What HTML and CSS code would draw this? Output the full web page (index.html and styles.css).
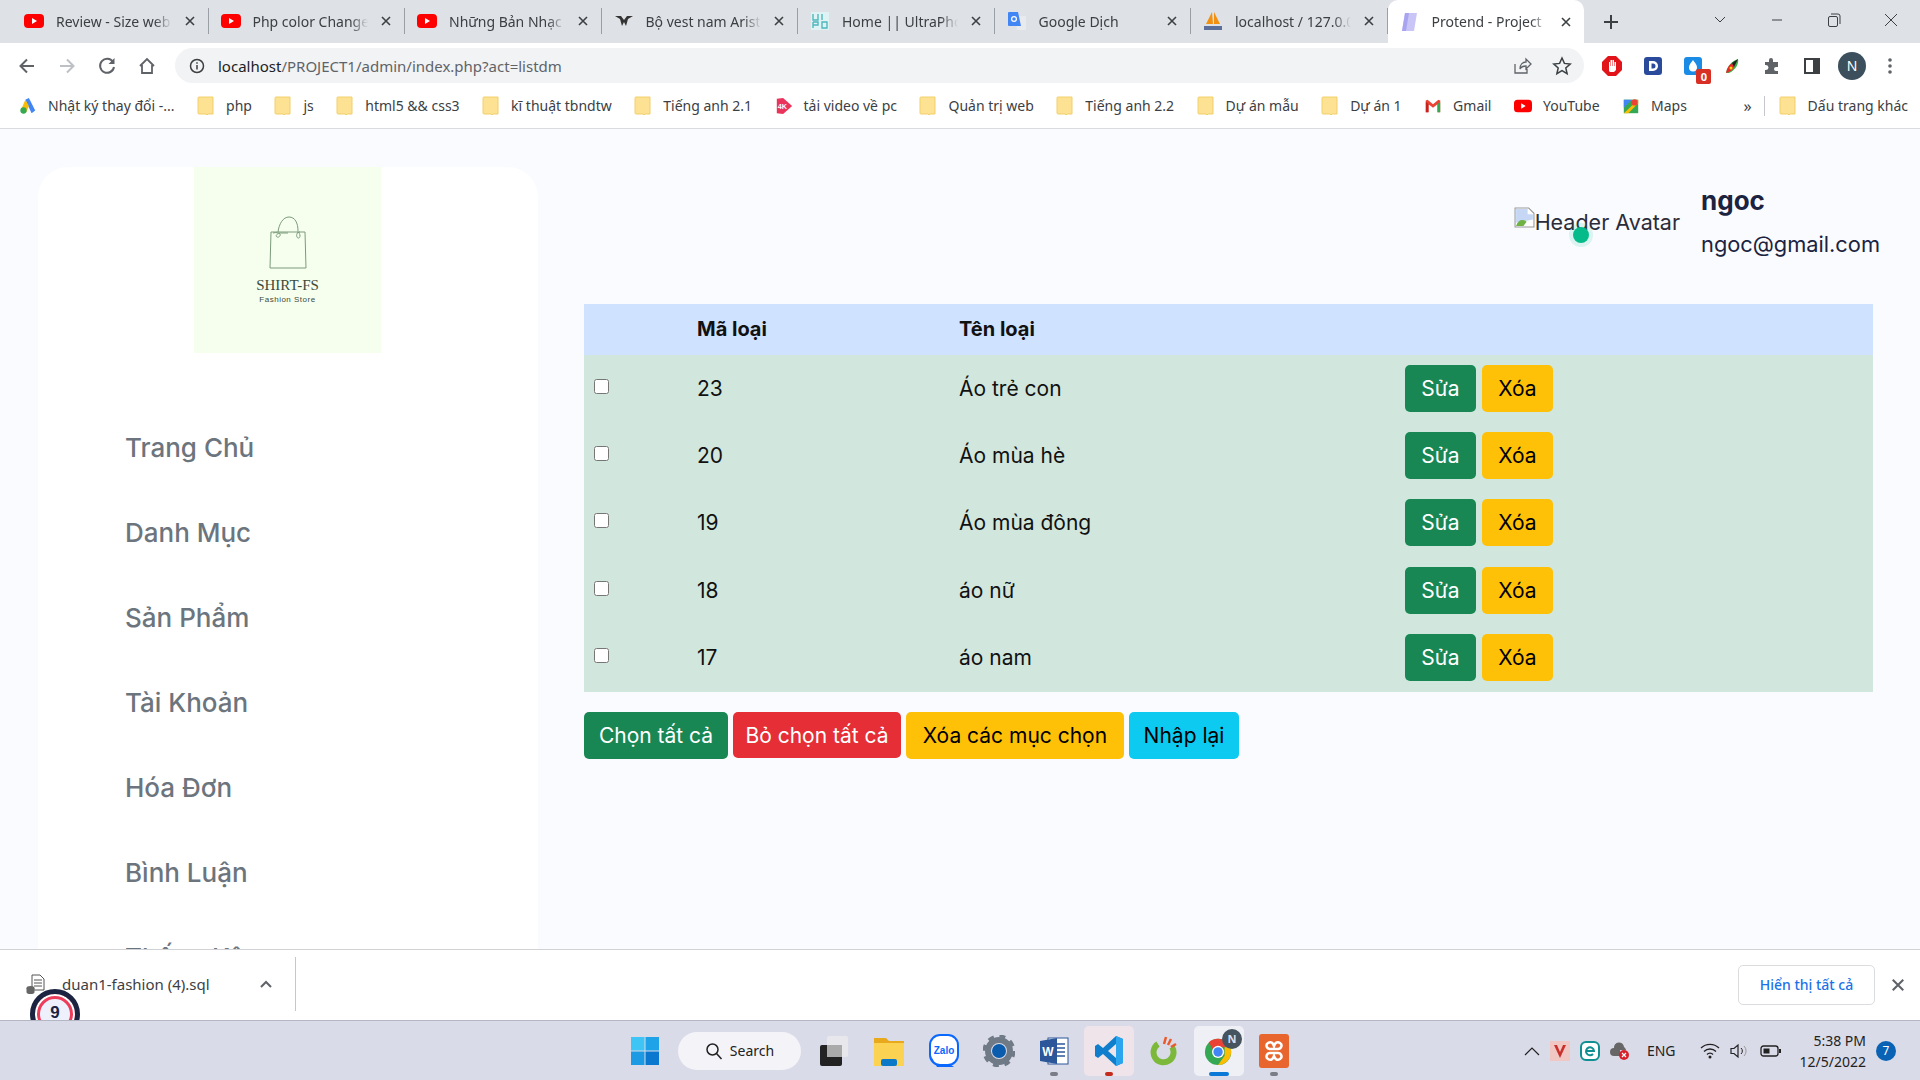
FILE: index.html
```html
<!DOCTYPE html>
<html lang="vi">
<head>
    <meta charset="UTF-8">
    <title>Protend - Project</title>
    <link rel="stylesheet" href="styles.css">
</head>
<body>
    <svg class="defs" width="0" height="0">
        <symbol id="yt" viewBox="0 0 20 20"><rect y="3" width="20" height="14" rx="4" fill="#f00"/><path d="M8 7l5 3-5 3z" fill="#fff"/></symbol>
        <symbol id="folder" viewBox="0 0 18 20"><path d="M2 1h9l5 0v17h-5l-1 1-1-1H2a1 1 0 0 1-1-1V2a1 1 0 0 1 1-1z" fill="#fde293" stroke="#f2cf6b"/></symbol>
        <symbol id="close" viewBox="0 0 12 12"><path d="M2 2l8 8M10 2l-8 8" stroke="#3c4043" stroke-width="1.6" fill="none"/></symbol>
    </svg>

    <div class="tabs">
        <div class="tab"><svg class="fav"><use href="#yt"/></svg><span class="tab-title">Review - Size web</span><svg class="tab-x"><use href="#close"/></svg></div>
        <div class="tab"><svg class="fav"><use href="#yt"/></svg><span class="tab-title">Php color Change</span><svg class="tab-x"><use href="#close"/></svg></div>
        <div class="tab"><svg class="fav"><use href="#yt"/></svg><span class="tab-title">Những Bản Nhạc</span><svg class="tab-x"><use href="#close"/></svg></div>
        <div class="tab"><svg class="fav" viewBox="0 0 20 20"><path d="M1 5h6l3 4 3-4h6l-5 3-2 7-2-4-2 4-2-7z" fill="#333"/></svg><span class="tab-title">Bộ vest nam Arist</span><svg class="tab-x"><use href="#close"/></svg></div>
        <div class="tab"><svg class="fav" viewBox="0 0 20 20"><rect x="1" y="1" width="18" height="18" fill="#dff3f4"/><path d="M3 3v6h5V3M3 11v6M12 3v6M3 11h5v3H3M12 11h5v6h-5z" stroke="#4fb7bd" stroke-width="1.4" fill="none"/></svg><span class="tab-title">Home || UltraPhone</span><svg class="tab-x"><use href="#close"/></svg></div>
        <div class="tab"><svg class="fav" viewBox="0 0 20 20"><path d="M8 5h10a1 1 0 0 1 1 1v12a1 1 0 0 1-1 1h-8z" fill="#e8eaed"/><path d="M2 1h9l3 14H2a1 1 0 0 1-1-1V2a1 1 0 0 1 1-1z" fill="#4285f4"/><circle cx="7" cy="8" r="2.4" fill="none" stroke="#fff" stroke-width="1.2"/></svg><span class="tab-title">Google Dịch</span><svg class="tab-x"><use href="#close"/></svg></div>
        <div class="tab"><svg class="fav" viewBox="0 0 20 20"><path d="M3 13L9 1l1 12zM11 13l0-12 6 12z" fill="#f29111"/><path d="M1 15h18v4H1z" fill="#5a6f99"/></svg><span class="tab-title">localhost / 127.0.0</span><svg class="tab-x"><use href="#close"/></svg></div>
        <div class="tab active"><svg class="fav" viewBox="0 0 20 20"><path d="M5 1h12l-3 18H2z" fill="#c9c6f7"/><path d="M5 1h4L6 19H2z" fill="#a9a4f0"/></svg><span class="tab-title">Protend - Project</span><svg class="tab-x"><use href="#close"/></svg></div>
        <svg class="new-tab" viewBox="0 0 16 16"><path d="M8 1v14M1 8h14" stroke="#3c4043" stroke-width="2"/></svg>
        <div class="win-ctrl">
            <svg width="14" height="14" viewBox="0 0 14 14"><path d="M2 4l5 5 5-5" stroke="#3c4043" fill="none"/></svg>
            <svg width="14" height="14" viewBox="0 0 14 14"><path d="M2 7h10" stroke="#3c4043"/></svg>
            <svg width="14" height="14" viewBox="0 0 14 14"><rect x="1.5" y="3.5" width="9" height="10" rx="1.5" stroke="#3c4043" fill="none"/><path d="M4 1h7a2 2 0 0 1 2 2v8" stroke="#3c4043" fill="none"/></svg>
            <svg width="14" height="14" viewBox="0 0 14 14"><path d="M1 1l12 12M13 1L1 13" stroke="#3c4043" fill="none"/></svg>
        </div>
    </div>

    <div class="toolbar">
        <svg class="tool" viewBox="0 0 20 20"><path d="M17 10H4M10 3.5L3.5 10l6.500 6.500" stroke="#5f6368" stroke-width="2" fill="none"/></svg>
        <svg class="tool" viewBox="0 0 20 20"><path d="M3 10h13M10 3.5l6.500 6.500-6.500 6.500" stroke="#bdc1c6" stroke-width="2" fill="none"/></svg>
        <svg class="tool" viewBox="0 0 20 20"><path d="M16 6a7 7 0 1 0 1 5" stroke="#5f6368" stroke-width="2" fill="none"/><path d="M17.5 2v6h-6z" fill="#5f6368"/></svg>
        <svg class="tool" viewBox="0 0 20 20"><path d="M3 10l7-7 7 7M5 9v8h10V9" stroke="#5f6368" stroke-width="1.8" fill="none"/></svg>
        <div class="omnibox">
            <svg width="16" height="16" viewBox="0 0 16 16"><circle cx="8" cy="8" r="6.5" fill="none" stroke="#3c4043" stroke-width="1.5"/><path d="M8 7v4.500M8 4.200v1.600" stroke="#3c4043" stroke-width="1.5"/></svg>
            <span class="url"><b>localhost</b>/PROJECT1/admin/index.php?act=listdm</span>
            <svg class="omni-end" width="20" height="20" viewBox="0 0 20 20"><path d="M3 8v9h12v-4M8 13c0-5 3-7 6-7V3l5 5-5 5v-3c-3 0-5 1-6 3z" stroke="#5f6368" stroke-width="1.3" fill="none"/></svg>
            <svg width="20" height="20" viewBox="0 0 20 20"><path d="M10 2l2.400 5.400 5.800.6-4.400 3.900 1.300 5.700-5.100-3-5.100 3 1.300-5.700L1.800 8l5.800-.6z" stroke="#3c4043" stroke-width="1.5" fill="none"/></svg>
        </div>
        <div class="extensions">
            <svg width="22" height="22" viewBox="0 0 22 22"><path d="M7 1h8l6 6v8l-6 6H7l-6-6V7z" fill="#e1141a"/><path d="M8 16V7h1v4h.5V5h1.500v6h.5V5h1.500v6h.500V7H15v8l-2 2H9z" fill="#fff"/></svg>
            <svg width="20" height="20" viewBox="0 0 20 20"><rect x="1" y="1" width="18" height="18" rx="3" fill="#2a4b9b"/><path d="M6 5h4a5 5 0 0 1 0 10H6z" fill="#fff"/><path d="M8.500 7.500h1.500a2.500 2.500 0 0 1 0 5H8.500z" fill="#2a4b9b"/></svg>
            <span class="ext-drop">
                <svg width="20" height="20" viewBox="0 0 20 20"><rect x="1" y="1" width="18" height="18" rx="3" fill="#1a8ce6"/><path d="M10 4c3 4 4 5.500 4 7.500a4 4 0 0 1-8 0C6 9.500 7 8 10 4z" fill="#fff"/></svg>
                <span class="ext-badge">0</span>
            </span>
            <svg width="18" height="18" viewBox="0 0 18 18"><path d="M2 16C3 9 8 4 14 2c1 4-2 11-9 14z" fill="#3cb043"/><path d="M2 16C3 11 5 8 8 6l2 4c-1 3-4 5-8 6z" fill="#e8272d"/><path d="M8 6l6-4-4 8z" fill="#222"/><circle cx="7" cy="11" r="1.5" fill="#f5d90a"/></svg>
            <svg width="20" height="20" viewBox="0 0 20 20"><path d="M3 6h4V4a2 2 0 0 1 4 0v2h5v5h-2a2 2 0 0 0 0 4h2v3H3v-4h1a2.500 2.500 0 0 0 0-5H3z" fill="#5f6368"/></svg>
            <svg width="20" height="20" viewBox="0 0 20 20"><path d="M3 3h14v14H3z" fill="none" stroke="#3c4043" stroke-width="2"/><path d="M11 3h6v14h-6z" fill="#3c4043"/></svg>
            <span class="profile">N</span>
            <svg width="16" height="20" viewBox="0 0 16 20"><circle cx="8" cy="4" r="1.8" fill="#5f6368"/><circle cx="8" cy="10" r="1.8" fill="#5f6368"/><circle cx="8" cy="16" r="1.8" fill="#5f6368"/></svg>
        </div>
    </div>

    <div class="bookmarks">
        <span class="bm"><svg class="bm-ic" viewBox="0 0 20 20"><path d="M7 3l4-2 7 14-4 3z" fill="#4285f4"/><path d="M7 3l4 7-3 7-6-2z" fill="#fbbc04"/><circle cx="5" cy="15" r="3.5" fill="#34a853"/></svg>Nhật ký thay đổi -...</span>
        <span class="bm"><svg class="bm-ic"><use href="#folder"/></svg>php</span>
        <span class="bm"><svg class="bm-ic"><use href="#folder"/></svg>js</span>
        <span class="bm"><svg class="bm-ic"><use href="#folder"/></svg>html5 &amp;&amp; css3</span>
        <span class="bm"><svg class="bm-ic"><use href="#folder"/></svg>kĩ thuật tbndtw</span>
        <span class="bm"><svg class="bm-ic"><use href="#folder"/></svg>Tiếng anh 2.1</span>
        <span class="bm"><svg class="bm-ic" viewBox="0 0 20 20"><path d="M2 2l7-1 10 9-10 9-7-1z" fill="#e9345b"/><text x="3" y="13" font-size="8" font-weight="700" fill="#fff" font-family="Liberation Sans">4K</text></svg>tải video về pc</span>
        <span class="bm"><svg class="bm-ic"><use href="#folder"/></svg>Quản trị web</span>
        <span class="bm"><svg class="bm-ic"><use href="#folder"/></svg>Tiếng anh 2.2</span>
        <span class="bm"><svg class="bm-ic"><use href="#folder"/></svg>Dự án mẫu</span>
        <span class="bm"><svg class="bm-ic"><use href="#folder"/></svg>Dự án 1</span>
        <span class="bm"><svg class="bm-ic" viewBox="0 0 20 20"><path d="M2 4v13h3V8l5 4 5-4v9h3V4l-2-1-6 5-6-5z" fill="#ea4335"/><path d="M2 5v12h3V8z" fill="#c5221f"/><path d="M15 8v9h3V5z" fill="#34a853"/></svg>Gmail</span>
        <span class="bm"><svg class="bm-ic"><use href="#yt"/></svg>YouTube</span>
        <span class="bm"><svg class="bm-ic" viewBox="0 0 20 20"><path d="M2 3h10l6 0v15H2z" fill="#34a853"/><path d="M2 18L18 3v4L7 18z" fill="#fbbc04"/><path d="M2 3h9L2 12z" fill="#4285f4"/><circle cx="14" cy="6" r="3.5" fill="#ea4335"/></svg>Maps</span>
        <div class="bm-end">
            <span class="bm-more">»</span>
            <span class="bm bm-other"><svg class="bm-ic"><use href="#folder"/></svg>Dấu trang khác</span>
        </div>
    </div>

    <div class="page">
        <aside class="sidebar">
            <div class="logo">
                <svg width="40" height="54" viewBox="0 0 40 54"><path d="M3 17h34l1 36H2zM10 17c1-8 5-15 11-15s9 6 9 14M5 18c3-1 6 0 7 1s-1 4-3 3 0-3 2-4h9M32 17c-3 0-4 3-3 5s3 1 3-1-1-4-3-4" fill="none" stroke="#7a9b7a" stroke-width="1"/></svg>
                <div class="logo-name">SHIRT-FS</div>
                <div class="logo-sub">Fashion Store</div>
            </div>
            <nav class="side-nav">
                <a href="#">Trang Chủ</a>
                <a href="#">Danh Mục</a>
                <a href="#">Sản Phẩm</a>
                <a href="#">Tài Khoản</a>
                <a href="#">Hóa Đơn</a>
                <a href="#">Bình Luận</a>
                <a href="#">Thống Kê</a>
            </nav>
        </aside>

        <main class="content">
            <div class="user-bar">
                <div class="avatar">
                    <svg class="broken" width="21" height="21" viewBox="0 0 20 20"><path d="M1 1h13l5 5v13H1z" fill="#fff" stroke="#999"/><path d="M2 2h11v5h5v5L2 15z" fill="#c5d7f5"/><path d="M2 18c2-6 6-7 10-4l-3 4z" fill="#6fb344"/></svg>Header Avatar
                    <span class="status-dot"></span>
                </div>
                <div class="user-info">
                    <div class="user-name">ngoc</div>
                    <div class="user-mail">ngoc@gmail.com</div>
                </div>
            </div>

            <table class="cat-table">
                <thead>
                    <tr><th class="col-check"></th><th class="col-id">Mã loại</th><th class="col-name">Tên loại</th><th></th></tr>
                </thead>
                <tbody>
                    <tr>
                        <td><input type="checkbox"></td><td>23</td><td>Áo trẻ con</td>
                        <td><a class="btn green" href="#">Sửa</a><a class="btn yellow" href="#">Xóa</a></td>
                    </tr>
                    <tr>
                        <td><input type="checkbox"></td><td>20</td><td>Áo mùa hè</td>
                        <td><a class="btn green" href="#">Sửa</a><a class="btn yellow" href="#">Xóa</a></td>
                    </tr>
                    <tr>
                        <td><input type="checkbox"></td><td>19</td><td>Áo mùa đông</td>
                        <td><a class="btn green" href="#">Sửa</a><a class="btn yellow" href="#">Xóa</a></td>
                    </tr>
                    <tr>
                        <td><input type="checkbox"></td><td>18</td><td>áo nữ</td>
                        <td><a class="btn green" href="#">Sửa</a><a class="btn yellow" href="#">Xóa</a></td>
                    </tr>
                    <tr>
                        <td><input type="checkbox"></td><td>17</td><td>áo nam</td>
                        <td><a class="btn green" href="#">Sửa</a><a class="btn yellow" href="#">Xóa</a></td>
                    </tr>
                </tbody>
            </table>

            <div class="actions">
                <a class="btn green select-all" href="#">Chọn tất cả</a>
                <a class="btn red select-none" href="#">Bỏ chọn tất cả</a>
                <a class="btn yellow delete-all" href="#">Xóa các mục chọn</a>
                <a class="btn cyan reset" href="#">Nhập lại</a>
            </div>
        </main>
    </div>

    <div class="downloads">
        <div class="dl-item">
            <svg width="20" height="20" viewBox="0 0 20 20"><path d="M6 1h8l4 4v11H6z" fill="#fff" stroke="#555"/><path d="M8 6h8M8 9h8M8 12h8" stroke="#555"/><ellipse cx="4.5" cy="14" rx="4" ry="2" fill="#666"/><path d="M.5 14v4a4 2 0 0 0 8 0v-4z" fill="#666"/></svg>
            <span class="dl-name">duan1-fashion (4).sql</span>
            <svg width="14" height="10" viewBox="0 0 14 10"><path d="M2 8l5-5 5 5" stroke="#5f6368" stroke-width="2" fill="none"/></svg>
        </div>
        <span class="dl-badge">9</span>
        <div class="dl-end">
            <span class="dl-all">Hiển thị tất cả</span>
            <svg width="14" height="14" viewBox="0 0 12 12"><path d="M1.5 1.5l9 9M10.500 1.5l-9 9" stroke="#5f6368" stroke-width="1.8"/></svg>
        </div>
    </div>

    <div class="taskbar">
        <div></div>
        <div class="task-center">
            <svg class="start" viewBox="0 0 30 30"><path d="M1 1h13.500v13.500H1z" fill="#3ec5f5"/><path d="M15.500 1H29v13.500H15.500z" fill="#1ea3e8"/><path d="M1 15.500h13.500V29H1z" fill="#1d9ae4"/><path d="M15.500 15.500H29V29H15.500z" fill="#0b78d0"/></svg>
            <div class="search"><svg width="18" height="18" viewBox="0 0 18 18"><circle cx="7.5" cy="7.5" r="5.5" fill="none" stroke="#222" stroke-width="1.5"/><path d="M11.5 11.500l5 5.500" stroke="#222" stroke-width="1.5"/></svg>Search</div>
            <div class="task-item"><svg width="30" height="32" viewBox="0 0 30 32"><rect x="1" y="10" width="22" height="21" rx="2" fill="#222"/><rect x="8" y="1" width="21" height="21" rx="2" fill="#e8e8ec"/><rect x="8" y="10" width="15" height="12" fill="#aaa"/></svg></div>
            <div class="task-item"><svg width="30" height="30" viewBox="0 0 30 30"><path d="M0 2h12l3 3h15v25H0z" fill="#e8a91c"/><path d="M0 7h30v23H0z" fill="#fbd251"/><rect x="7" y="23" width="16" height="7" rx="2" fill="#0b78c8"/></svg></div>
            <div class="task-item"><svg width="30" height="34" viewBox="0 0 30 34"><rect x="1" y="1" width="28" height="30" rx="10" fill="#fff" stroke="#0a68ff" stroke-width="2"/><path d="M2 22c1 8 7 10 20 9l3 2H8z" fill="#0a68ff"/><text x="15" y="20" font-size="10" font-weight="700" fill="#0a68ff" text-anchor="middle" font-family="Liberation Sans">Zalo</text></svg></div>
            <div class="task-item"><svg width="32" height="32" viewBox="0 0 32 32"><circle cx="16" cy="16" r="11" fill="none" stroke="#6f7a86" stroke-width="6"/><circle cx="16" cy="16" r="15" fill="none" stroke="#6f7a86" stroke-width="3" stroke-dasharray="6 5.78"/><circle cx="16" cy="16" r="7" fill="#0b5cad"/></svg></div>
            <div class="task-item dot-grey"><svg width="30" height="30" viewBox="0 0 30 30"><rect x="9" y="2" width="20" height="26" fill="#fff" stroke="#2b579a"/><path d="M18 8h8M18 12h8M18 16h8M18 20h8" stroke="#2b579a" stroke-width="1.5"/><path d="M1 5l17-3v26L1 25z" fill="#2b579a"/><text x="9" y="20" font-size="12" font-weight="700" fill="#fff" text-anchor="middle" font-family="Liberation Sans">W</text></svg></div>
            <div class="task-item vscode"><svg width="30" height="32" viewBox="0 0 30 32"><path d="M22 1l7 3v24l-7 3-13-12-5 4-3-2v-10l3-2 5 4zM22 9l-8 7 8 7z" fill="#0f7fcd"/><path d="M22 1l7 3v24l-7 3z" fill="#2aa5ee"/></svg></div>
            <div class="task-item"><svg width="28" height="32" viewBox="0 0 28 32"><path d="M22 12a10 10 0 1 1-14-3" fill="none" stroke="#7cb93a" stroke-width="6"/><path d="M16 2l-2 7M21 4l-3 6M26 9l-5 3" stroke="#ea5a2b" stroke-width="2.5"/></svg></div>
            <div class="task-item chrome">
                <svg width="30" height="34" viewBox="0 0 32 32"><circle cx="15" cy="17" r="14" fill="#34a853"/><path d="M15 3a14 14 0 0 1 13 9H15a5 5 0 0 0-5 3L5 7a14 14 0 0 1 10-4z" fill="#ea4335"/><path d="M28 12a14 14 0 0 1-13 19l7-10v-9z" fill="#fbbc04"/><circle cx="15" cy="17" r="6.5" fill="#fff"/><circle cx="15" cy="17" r="5" fill="#4285f4"/></svg>
                <span class="chrome-n">N</span>
            </div>
            <div class="task-item dot-grey"><svg width="30" height="34" viewBox="0 0 30 34"><rect x="0" y="0" width="30" height="34" rx="3" fill="#e8662d"/><path d="M9 9c3-2 5 0 6 3 1-3 3-5 6-3s1 6-2 6h-8c-3 0-5-4-2-6zM9 25c3 2 5 0 6-3 1 3 3 5 6 3s1-6-2-6h-8c-3 0-5 4-2 6z" fill="none" stroke="#fff" stroke-width="2.5"/></svg></div>
        </div>
        <div class="tray">
            <svg width="16" height="10" viewBox="0 0 16 10"><path d="M1 9l7-7 7 7" stroke="#222" stroke-width="1.2" fill="none"/></svg>
            <svg width="20" height="20" viewBox="0 0 20 20"><rect width="20" height="20" fill="#f1c7c3"/><path d="M4 4l6 13 6-13h-3l-3 7-3-7z" fill="#c9302c"/></svg>
            <svg width="20" height="20" viewBox="0 0 20 20"><rect x="1" y="1" width="18" height="18" rx="5" fill="#fff" stroke="#0f8f8f" stroke-width="2"/><path d="M6 10h8a4 4 0 1 0-1 3" fill="none" stroke="#0f8f8f" stroke-width="2"/></svg>
            <svg width="20" height="20" viewBox="0 0 20 20"><path d="M4 15a4 4 0 0 1 0-8 5 5 0 0 1 10-1 5 5 0 0 1 2 3H10v6z" fill="#666"/><circle cx="14" cy="14" r="5" fill="#d8202c"/><path d="M12 12l4 4M16 12l-4 4" stroke="#fff" stroke-width="1.2"/></svg>
            <span class="lang">ENG</span>
            <svg width="20" height="16" viewBox="0 0 20 16"><path d="M1 5a13 13 0 0 1 18 0M4 8.500a8.500 8.500 0 0 1 12 0M7 11.500a4 4 0 0 1 6 0" stroke="#222" stroke-width="1.3" fill="none"/><circle cx="10" cy="14" r="1.5" fill="#222"/></svg>
            <svg width="20" height="16" viewBox="0 0 20 16"><path d="M1 5.500h3l4-3.500v12l-4-3.500H1z" fill="none" stroke="#222" stroke-width="1.2"/><path d="M11 5a4 4 0 0 1 0 6" stroke="#222" fill="none"/><path d="M14 3a7 7 0 0 1 0 10" stroke="#999" fill="none"/></svg>
            <svg width="22" height="14" viewBox="0 0 22 14"><rect x="1" y="2" width="17" height="10" rx="2.5" fill="none" stroke="#222" stroke-width="1.3"/><rect x="3.5" y="4.5" width="6" height="5" fill="#222"/><rect x="19" y="5" width="2" height="4" fill="#222"/></svg>
            <div class="clock"><div>5:38 PM</div><div>12/5/2022</div></div>
            <span class="notif">7</span>
        </div>
    </div>
</body>
</html>
```

FILE: styles.css
```css
:root {
    --page-bg: #f9fbff;
    --chrome-bg: #dee1e6;
    --ink: #1c2340;
    --green: #198754;
    --yellow: #ffc107;
    --red: #e52e36;
    --cyan: #0dcaf0;
}

* {
    margin: 0;
    padding: 0;
    box-sizing: border-box;
}

html, body {
    height: 100%;
    overflow: hidden;
}

body {
    display: flex;
    flex-direction: column;
    font-family: "Noto Sans", sans-serif;
    color: #3c4043;
    background: var(--page-bg);
}

.defs {
    display: block;
    height: 0;
}

/* browser tab strip */
.tabs {
    height: 43px;
    display: flex;
    align-items: flex-end;
    padding-left: 12px;
    background: var(--chrome-bg);
    flex-shrink: 0;
}

.tab {
    width: 196.5px;
    height: 26px;
    margin-bottom: 9px;
    display: flex;
    align-items: center;
    padding: 0 12px;
    gap: 12px;
    font-size: 14px;
    border-right: 1px solid #9a9ea5;
}

.tab.active {
    height: 43px;
    margin-bottom: 0;
    background: #fff;
    border-radius: 10px 10px 0 0;
    border-right: none;
}

.fav {
    width: 20px;
    height: 20px;
    flex-shrink: 0;
}

.tab-title {
    flex: 1;
    white-space: nowrap;
    overflow: hidden;
    -webkit-mask-image: linear-gradient(to right, #000 85%, transparent);
    mask-image: linear-gradient(to right, #000 85%, transparent);
}

.tab-x {
    width: 12px;
    height: 12px;
    flex-shrink: 0;
}

.new-tab {
    width: 16px;
    height: 16px;
    margin: 0 0 13px 19px;
}

.win-ctrl {
    margin-left: auto;
    height: 100%;
    width: 230px;
    padding: 0 22px 4px 23px;
    display: flex;
    justify-content: space-between;
    align-items: center;
}

/* address bar */
.toolbar {
    height: 45px;
    display: flex;
    align-items: center;
    padding-left: 17px;
    gap: 20px;
    background: #fff;
    flex-shrink: 0;
}

.tool {
    width: 20px;
    height: 20px;
}

.omnibox {
    width: 1409px;
    height: 35px;
    margin-left: -2px;
    display: flex;
    align-items: center;
    padding: 0 12px 0 14px;
    gap: 20px;
    background: #f1f3f4;
    border-radius: 18px;
}

.omnibox > svg:first-child {
    margin-right: -7px;
}

.url {
    font-size: 15px;
    color: #5f6368;
}

.url b {
    font-weight: 400;
    color: #202124;
}

.omni-end {
    margin-left: auto;
}

.extensions {
    display: flex;
    align-items: center;
    gap: 20.2px;
    margin-left: -3px;
}

.ext-drop {
    position: relative;
    display: flex;
}

.ext-badge {
    position: absolute;
    right: -8px;
    bottom: -8px;
    width: 15px;
    height: 15px;
    background: #d93025;
    color: #fff;
    font-size: 11px;
    font-weight: 700;
    line-height: 15px;
    text-align: center;
    border-radius: 2px;
}

.profile {
    width: 28px;
    height: 28px;
    margin: 0 -4px;
    border-radius: 50%;
    background: #3c4f5c;
    color: #fff;
    font-size: 14px;
    line-height: 28px;
    text-align: center;
}

/* bookmarks */
.bookmarks {
    height: 41px;
    display: flex;
    align-items: center;
    padding: 0 12px 5px 19px;
    gap: 22.5px;
    background: #fff;
    border-bottom: 1px solid #d9dbde;
    flex-shrink: 0;
}

.bm {
    display: flex;
    align-items: center;
    gap: 11px;
    font-size: 14px;
    white-space: nowrap;
}

.bm-ic {
    width: 18px;
    height: 20px;
    flex-shrink: 0;
}

.bm-end {
    margin-left: auto;
    display: flex;
    align-items: center;
}

.bm-more {
    font-size: 16px;
    margin-right: 12px;
}

.bm-other {
    border-left: 1px solid #c4c7cb;
    padding-left: 14px;
}

/* page */
.page {
    flex: 1;
    min-height: 0;
    display: flex;
    overflow: hidden;
    padding: 38px 47px 0 38px;
    background: var(--page-bg);
}

.sidebar {
    width: 500px;
    flex-shrink: 0;
    background: #fff;
    border-radius: 30px 30px 0 0;
}

.logo {
    width: 187px;
    height: 186px;
    margin: 0 auto 0 156px;
    padding-top: 48px;
    display: flex;
    flex-direction: column;
    align-items: center;
    background: #f6ffee;
    color: #3c4a3c;
}

.logo-name {
    margin-top: 8px;
    font-family: "Liberation Serif", serif;
    font-size: 15px;
}

.logo-sub {
    margin-top: 1px;
    font-family: "Liberation Sans", sans-serif;
    font-size: 8px;
    letter-spacing: 0.5px;
}

.side-nav {
    display: flex;
    flex-direction: column;
    padding: 75px 0 0 87px;
    gap: 45px;
}

.side-nav a {
    height: 40px;
    line-height: 40px;
    font-family: Inter, sans-serif;
    font-size: 26px;
    font-weight: 500;
    color: #6c757d;
    text-decoration: none;
}

.content {
    flex: 1;
    min-width: 0;
    margin-left: 46px;
}

.user-bar {
    height: 137px;
    margin-right: -7px;
    display: flex;
    justify-content: flex-end;
    color: var(--ink);
}

.avatar {
    position: relative;
    display: flex;
    align-items: flex-start;
    padding-top: 40px;
    height: 70px;
    margin-right: 21px;
    font-family: Inter, sans-serif;
    font-size: 21.5px;
    line-height: 30px;
    color: #2c2c38;
}

.broken {
    flex-shrink: 0;
}

.status-dot {
    position: absolute;
    left: 59px;
    top: 60px;
    width: 16px;
    height: 16px;
    background: #06bb8a;
    border-radius: 50%;
    box-shadow: 0 0 0 4px rgba(6, 187, 138, 0.12);
}

.user-name {
    margin-top: 16px;
    font-family: Inter, sans-serif;
    font-size: 26px;
    font-weight: 700;
    line-height: 36px;
}

.user-mail {
    margin-top: 9px;
    font-family: Inter, sans-serif;
    font-size: 21.8px;
    line-height: 32px;
}

.cat-table {
    width: 100%;
    border-collapse: collapse;
    table-layout: fixed;
    font-family: Inter, sans-serif;
    font-size: 21px;
    color: #111;
}

.cat-table thead tr {
    height: 51px;
    background: #cfe2ff;
}

.cat-table th {
    text-align: left;
    font-size: 20px;
    font-weight: 700;
    padding-bottom: 2px;
}

.cat-table tbody tr {
    height: 67.4px;
    background: #d1e7dd;
}

.cat-table td {
    vertical-align: middle;
    padding-bottom: 1px;
}

.col-check {
    width: 113px;
}

.col-id {
    width: 262px;
}

.col-name {
    width: 446px;
}

.cat-table input {
    display: block;
    width: 15px;
    height: 15px;
    margin: -4px 0 0 10px;
}

.btn {
    display: inline-flex;
    align-items: center;
    justify-content: center;
    height: 47px;
    border-radius: 5px;
    font-family: Inter, sans-serif;
    font-size: 21px;
    text-decoration: none;
    color: #000;
}

.cat-table .btn {
    width: 71px;
    margin-right: 6px;
}

.btn.green {
    background: var(--green);
    color: #fff;
}

.btn.yellow {
    background: var(--yellow);
}

.btn.red {
    background: var(--red);
    color: #fff;
    height: 46px;
}

.btn.cyan {
    background: var(--cyan);
}

.actions {
    display: flex;
    align-items: center;
    gap: 5px;
    margin-top: 20px;
}

.select-all {
    width: 144px;
}

.select-none {
    width: 168px;
}

.delete-all {
    width: 218px;
}

.reset {
    width: 110px;
}

/* download shelf */
.downloads {
    position: relative;
    height: 71px;
    display: flex;
    align-items: center;
    background: #fff;
    border-top: 1px solid #d0d2d6;
    flex-shrink: 0;
}

.dl-item {
    width: 296px;
    height: 54px;
    display: flex;
    align-items: center;
    padding: 0 22px 0 26px;
    border-right: 1px solid #c4c7cb;
    margin-top: -2px;
}

.dl-name {
    flex: 1;
    margin-left: 16px;
    font-size: 15px;
    color: #3c4043;
}

.dl-badge {
    position: absolute;
    left: 30px;
    top: 39px;
    width: 50px;
    height: 50px;
    padding-top: 9px;
    border: 5px solid var(--ink);
    border-radius: 50%;
    background: #eef1fb;
    box-shadow: inset 0 0 0 2px #fff, inset 0 0 0 5px #ee3d5a;
    font-family: "Liberation Sans", sans-serif;
    font-size: 17px;
    font-weight: 700;
    text-align: center;
    color: var(--ink);
    clip-path: inset(0 0 19px 0);
}

.dl-end {
    margin-left: auto;
    display: flex;
    align-items: center;
    gap: 16px;
    padding-right: 15px;
}

.dl-all {
    width: 137px;
    height: 40px;
    line-height: 38px;
    text-align: center;
    border: 1px solid #dadce0;
    border-radius: 5px;
    font-size: 14px;
    font-weight: 500;
    color: #1a73e8;
}

/* windows taskbar */
.taskbar {
    height: 60px;
    display: grid;
    grid-template-columns: 1fr auto 1fr;
    align-items: center;
    background: #dadbe8;
    border-top: 1px solid #b5b6c4;
    flex-shrink: 0;
}

.task-center {
    display: flex;
    align-items: center;
    gap: 5px;
    margin-left: 9px;
}

.start {
    width: 30px;
    height: 30px;
    margin-right: 13px;
}

.search {
    width: 123px;
    height: 38px;
    margin-right: 3px;
    display: flex;
    align-items: center;
    justify-content: center;
    gap: 7px;
    background: #f3f3f8;
    border-radius: 19px;
    font-size: 14px;
    color: #222;
}

.task-item {
    position: relative;
    width: 50px;
    height: 50px;
    display: flex;
    align-items: center;
    justify-content: center;
    border-radius: 5px;
}

.vscode {
    background: #efe4ea;
}

.chrome {
    background: #eef0f6;
}

.dot-grey::after,
.vscode::after,
.chrome::after {
    content: "";
    position: absolute;
    left: 50%;
    bottom: 0;
    width: 8px;
    height: 4px;
    margin-left: -4px;
    border-radius: 2px;
    background: #7a7d85;
}

.vscode::after {
    background: #c42b1c;
}

.chrome::after {
    width: 20px;
    margin-left: -10px;
    background: #0a78d7;
}

.chrome-n {
    position: absolute;
    right: 2px;
    top: 3px;
    width: 20px;
    height: 20px;
    border-radius: 50%;
    background: #46545f;
    color: #dde;
    font-size: 11px;
    font-weight: 700;
    line-height: 20px;
    text-align: center;
}

.tray {
    display: flex;
    align-items: center;
    justify-content: flex-end;
    gap: 10px;
    padding-right: 24px;
    font-size: 14px;
    color: #222;
}

.lang {
    margin: 0 14px 0 7px;
}

.clock {
    margin-left: 8px;
    font-size: 14px;
    line-height: 21px;
    text-align: right;
}

.notif {
    width: 20px;
    height: 20px;
    border-radius: 50%;
    background: #0a62b5;
    color: #fff;
    font-size: 12px;
    line-height: 20px;
    text-align: center;
}
```
